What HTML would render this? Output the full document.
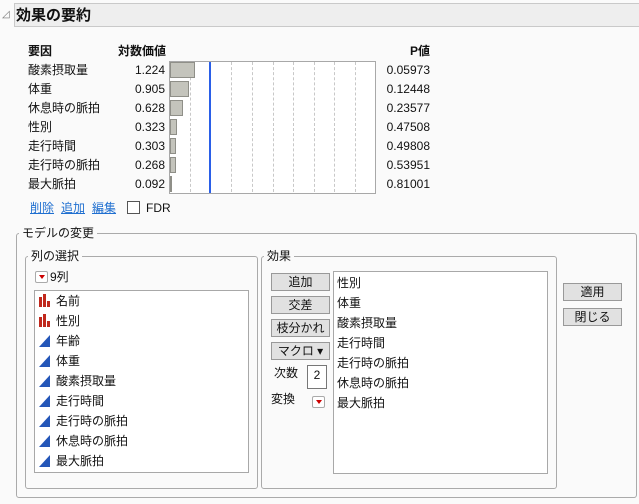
<!DOCTYPE html>
<html><head><meta charset="utf-8"><style>
*{margin:0;padding:0;box-sizing:border-box}
body{width:639px;height:504px;background:#fafafa;font-family:"Liberation Sans","Noto Sans CJK JP",sans-serif;font-size:12px;color:#111;position:relative;overflow:hidden}
.a{position:absolute;white-space:nowrap;line-height:14px}
.box{position:absolute;border:1px solid #aaa;border-radius:3px}
.leg{position:absolute;background:#fafafa;padding:0 3px;line-height:14px;font-size:12px}
.btn{position:absolute;width:59px;height:18px;background:#e1e1e1;border:1px solid #999;text-align:center;line-height:16px;font-size:12px}
.list{position:absolute;background:#fff;border:1px solid #a8a8a8}
.bar{position:absolute;left:170px;height:16px;background:#c4c4bc;border:1px solid #8f8f88}
.dl{position:absolute;top:62px;height:130px;border-left:1px dashed #c8c8c8}
.r{text-align:right}
.dd{position:absolute;width:13px;height:12px;border:1px solid #aaa;background:#fff;border-radius:2px}
.dd:after{content:"";position:absolute;left:3px;top:3px;border-left:3px solid transparent;border-right:3px solid transparent;border-top:4px solid #c00}
</style></head><body>
<div style="position:absolute;left:14px;top:3px;width:630px;height:24px;background:#eeeeee;border:1px solid #c9c9c9"></div>
<div class="a" style="left:2px;top:8px;font-size:10px;color:#777">◿</div>
<div class="a" style="left:16px;top:7px;font-size:15px;font-weight:bold;line-height:18px">効果の要約</div>

<div class="a" style="left:28px;top:44px;font-weight:bold">要因</div>
<div class="a" style="left:118px;top:44px;font-weight:bold">対数価値</div>
<div class="a" style="left:410px;top:44px;font-weight:bold">P値</div>

<div style="position:absolute;left:169px;top:61px;width:207px;height:133px;border:1px solid #a8a8a8;background:#fff"></div>
<div class="dl" style="left:190px"></div><div class="dl" style="left:231px"></div><div class="dl" style="left:252px"></div><div class="dl" style="left:273px"></div><div class="dl" style="left:293px"></div><div class="dl" style="left:314px"></div><div class="dl" style="left:334px"></div><div class="dl" style="left:355px"></div>
<div class="bar" style="top:62px;width:25px"></div>
<div class="bar" style="top:81px;width:19px"></div>
<div class="bar" style="top:100px;width:13px"></div>
<div class="bar" style="top:119px;width:7px"></div>
<div class="bar" style="top:138px;width:6px"></div>
<div class="bar" style="top:157px;width:6px"></div>
<div class="bar" style="top:176px;width:2px"></div>
<div style="position:absolute;left:209px;top:62px;width:2px;height:131px;background:#2a5fe8"></div>

<div class="a" style="left:28px;top:63px">酸素摂取量</div><div class="a r" style="left:120px;width:45px;top:63px">1.224</div><div class="a r" style="left:380px;width:50px;top:63px">0.05973</div>
<div class="a" style="left:28px;top:82px">体重</div><div class="a r" style="left:120px;width:45px;top:82px">0.905</div><div class="a r" style="left:380px;width:50px;top:82px">0.12448</div>
<div class="a" style="left:28px;top:101px">休息時の脈拍</div><div class="a r" style="left:120px;width:45px;top:101px">0.628</div><div class="a r" style="left:380px;width:50px;top:101px">0.23577</div>
<div class="a" style="left:28px;top:120px">性別</div><div class="a r" style="left:120px;width:45px;top:120px">0.323</div><div class="a r" style="left:380px;width:50px;top:120px">0.47508</div>
<div class="a" style="left:28px;top:139px">走行時間</div><div class="a r" style="left:120px;width:45px;top:139px">0.303</div><div class="a r" style="left:380px;width:50px;top:139px">0.49808</div>
<div class="a" style="left:28px;top:158px">走行時の脈拍</div><div class="a r" style="left:120px;width:45px;top:158px">0.268</div><div class="a r" style="left:380px;width:50px;top:158px">0.53951</div>
<div class="a" style="left:28px;top:177px">最大脈拍</div><div class="a r" style="left:120px;width:45px;top:177px">0.092</div><div class="a r" style="left:380px;width:50px;top:177px">0.81001</div>

<div class="a" style="left:30px;top:201px;color:#1f6fd0;text-decoration:underline">削除</div>
<div class="a" style="left:61px;top:201px;color:#1f6fd0;text-decoration:underline">追加</div>
<div class="a" style="left:92px;top:201px;color:#1f6fd0;text-decoration:underline">編集</div>
<div style="position:absolute;left:127px;top:201px;width:13px;height:13px;border:1px solid #555;background:#fff"></div>
<div class="a" style="left:146px;top:201px">FDR</div>

<div class="box" style="left:16px;top:233px;width:621px;height:265px"></div>
<div class="leg" style="left:19px;top:226px">モデルの変更</div>
<div class="box" style="left:25px;top:256px;width:233px;height:233px"></div>
<div class="leg" style="left:28px;top:249px">列の選択</div>
<div class="dd" style="left:35px;top:271px"></div>
<div class="a" style="left:50px;top:270px">9列</div>
<div class="list" style="left:34px;top:290px;width:215px;height:183px"></div>
<div class="box" style="left:261px;top:256px;width:296px;height:233px"></div>
<div class="leg" style="left:264px;top:249px">効果</div>

<svg style="position:absolute;left:38px;top:294px" width="16" height="180">
<g fill="#c0281c"><rect x="1" y="3" width="3" height="10"/><rect x="5" y="0" width="3" height="13"/><rect x="9" y="7" width="3" height="6"/><rect x="1" y="23" width="3" height="10"/><rect x="5" y="20" width="3" height="13"/><rect x="9" y="27" width="3" height="6"/></g>
<g fill="#2456b8"><path d="M1 53L12 41L12 53Z"/><path d="M1 73L12 61L12 73Z"/><path d="M1 93L12 81L12 93Z"/><path d="M1 113L12 101L12 113Z"/><path d="M1 133L12 121L12 133Z"/><path d="M1 153L12 141L12 153Z"/><path d="M1 173L12 161L12 173Z"/></g>
</svg>
<div class="a" style="left:56px;top:294px">名前</div>
<div class="a" style="left:56px;top:314px">性別</div>
<div class="a" style="left:56px;top:334px">年齢</div>
<div class="a" style="left:56px;top:354px">体重</div>
<div class="a" style="left:56px;top:374px">酸素摂取量</div>
<div class="a" style="left:56px;top:394px">走行時間</div>
<div class="a" style="left:56px;top:414px">走行時の脈拍</div>
<div class="a" style="left:56px;top:434px">休息時の脈拍</div>
<div class="a" style="left:56px;top:454px">最大脈拍</div>

<div class="btn" style="left:271px;top:273px">追加</div>
<div class="btn" style="left:271px;top:296px">交差</div>
<div class="btn" style="left:271px;top:319px">枝分かれ</div>
<div class="btn" style="left:271px;top:342px">マクロ ▾</div>
<div class="a" style="left:274px;top:366px">次数</div>
<div style="position:absolute;left:307px;top:365px;width:20px;height:24px;background:#fff;border:1px solid #777;text-align:center;font-size:12px;line-height:18px">2</div>
<div class="a" style="left:271px;top:392px">変換</div>
<div class="dd" style="left:312px;top:396px"></div>

<div class="list" style="left:333px;top:271px;width:215px;height:203px"></div>
<div class="a" style="left:337px;top:276px">性別</div>
<div class="a" style="left:337px;top:296px">体重</div>
<div class="a" style="left:337px;top:316px">酸素摂取量</div>
<div class="a" style="left:337px;top:336px">走行時間</div>
<div class="a" style="left:337px;top:356px">走行時の脈拍</div>
<div class="a" style="left:337px;top:376px">休息時の脈拍</div>
<div class="a" style="left:337px;top:396px">最大脈拍</div>

<div class="btn" style="left:563px;top:283px">適用</div>
<div class="btn" style="left:563px;top:308px">閉じる</div>
</body></html>
